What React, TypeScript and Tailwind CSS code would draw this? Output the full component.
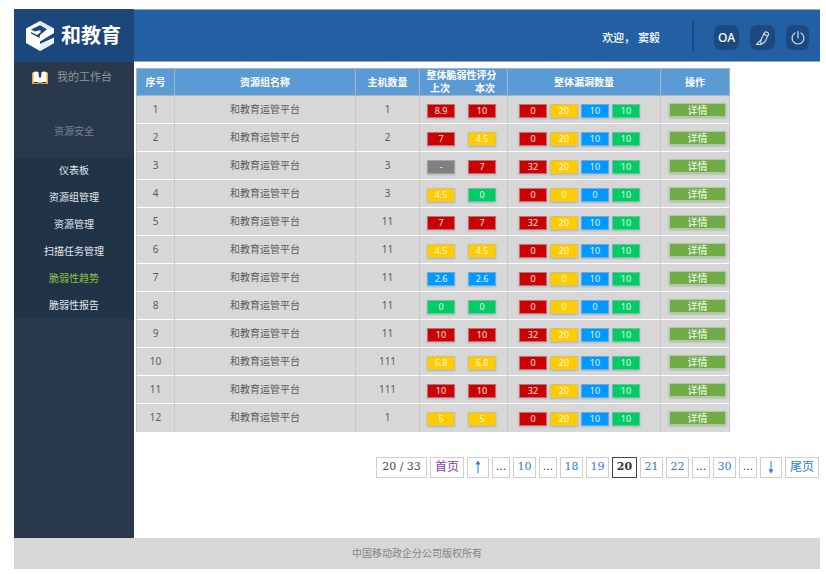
type Tone = "red" | "yellow" | "blue" | "green" | "gray";
type Score = [string, Tone];

interface Row {
  hosts: number;
  last: Score;
  current: Score;
  holes: [number, number, number, number];
}

const rows: Row[] = [
  { hosts: 1, last: ["8.9", "red"], current: ["10", "red"], holes: [0, 20, 10, 10] },
  { hosts: 2, last: ["7", "red"], current: ["4.5", "yellow"], holes: [0, 20, 10, 10] },
  { hosts: 3, last: ["-", "gray"], current: ["7", "red"], holes: [32, 20, 10, 10] },
  { hosts: 3, last: ["4.5", "yellow"], current: ["0", "green"], holes: [0, 0, 0, 10] },
  { hosts: 11, last: ["7", "red"], current: ["7", "red"], holes: [32, 20, 10, 10] },
  { hosts: 11, last: ["4.5", "yellow"], current: ["4.5", "yellow"], holes: [0, 20, 10, 10] },
  { hosts: 11, last: ["2.6", "blue"], current: ["2.6", "blue"], holes: [0, 0, 10, 10] },
  { hosts: 11, last: ["0", "green"], current: ["0", "green"], holes: [0, 0, 0, 10] },
  { hosts: 11, last: ["10", "red"], current: ["10", "red"], holes: [32, 20, 10, 10] },
  { hosts: 111, last: ["6.8", "yellow"], current: ["6.8", "yellow"], holes: [0, 20, 10, 10] },
  { hosts: 111, last: ["10", "red"], current: ["10", "red"], holes: [32, 20, 10, 10] },
  { hosts: 1, last: ["5", "yellow"], current: ["5", "yellow"], holes: [0, 20, 10, 10] },
];

const toneClass: Record<Tone, string> = {
  red: "bg-[#cc0000]",
  yellow: "bg-[#ffcc00]",
  blue: "bg-[#0099ff]",
  green: "bg-[#00cc66]",
  gray: "bg-[#808080]",
};

const holeTones: Tone[] = ["red", "yellow", "blue", "green"];

const menu = ["仪表板", "资源组管理", "资源管理", "扫描任务管理", "脆弱性趋势", "脆弱性报告"];

function Pill({ tone, children }: { tone: Tone; children: React.ReactNode }) {
  return (
    <span
      className={`block h-[14px] w-7 border border-[#b9b9b9]/60 text-center text-[9px] leading-[12px] text-white/90 shadow-[0_1px_2px_rgba(90,120,160,0.35)] ${toneClass[tone]}`}
    >
      {children}
    </span>
  );
}

function Logo() {
  return (
    <svg viewBox="0 0 28 30" className="h-[30px] w-7" aria-hidden="true">
      <path d="M0 7.500 14 0l14 7.500V22l-14 8-14-8Z" fill="#fff" />
      <path d="M14 0v4.500l8 4L28 7.500Z" fill="#dfe8f2" />
      <path d="M14 24v6l14-8v-5Z" fill="#e9eff6" />
      <path d="M5 8.500 14 4.300l7 3.900-7 5.800-.5 3L5 12.500v-1.500l6 3 3.500-2.500V9L9 10.500Z" fill="#1b477a" />
      <path d="M14 20.500v2.500l14-6.500V12Z" fill="#1b477a" />
    </svg>
  );
}

function BookIcon() {
  return (
    <svg viewBox="0 0 16 13" className="h-[13px] w-4" aria-hidden="true">
      <path d="M0 1.500h2V12h4.500L8 13H0ZM14 1.500h2V13H8l1.500-1H14Z" fill="#f0a030" />
      <path d="M1.500 1C3 .2 5 .2 6.500 1.200L7 7l1-1.200L9 7l.5-5.800C11 .2 13 .2 14.500 1v10.500C12 10.800 10 11 8 12.300 6 11 4 10.800 1.500 11.500Z" fill="#fff" />
      <path d="M7.600 7v5h.8V7Z" fill="#f0c080" />
    </svg>
  );
}

function PencilIcon() {
  return (
    <svg viewBox="0 0 16 16" className="size-4" fill="none" stroke="#d5e0ec" strokeWidth="1.1" strokeLinejoin="round" strokeLinecap="round" aria-hidden="true">
      <path d="M1.500 14.500h4.300L9.800 12l3.700-7.500c.7-1.600-3-3.500-3.900-2L6 9.800Z" />
      <path d="M8.600 4l3.900 2M6 9.800l-.2 4.500" />
    </svg>
  );
}

function PowerIcon() {
  return (
    <svg viewBox="0 0 16 16" className="size-4" fill="none" stroke="#d5e0ec" strokeWidth="1.2" strokeLinecap="round" aria-hidden="true">
      <path d="M8 1.500V8M5 3a5.900 5.900 0 1 0 6 0" />
    </svg>
  );
}

function Arrow({ up }: { up?: boolean }) {
  return (
    <svg viewBox="0 0 8 14" className={up ? "h-[14px] w-2" : "h-[14px] w-2 rotate-180"} fill="none" stroke="#2a7bd6" aria-hidden="true">
      <path d="M4 13V2" />
      <path d="M4 .5 1.500 4.500h5Z" fill="#2a7bd6" stroke="none" />
    </svg>
  );
}

const pageBox = "flex h-[21px] items-center justify-center border border-[#cfcfcf]";

function PageLink({ n }: { n: number }) {
  return (
    <a href="#" className={`${pageBox} w-[23px] text-[#2a7bd6]`}>
      {n}
    </a>
  );
}

function Dots() {
  return <span className={`${pageBox} w-[18px] text-[#444]`}>...</span>;
}

const th = "border border-[#a3b4c4] p-0 font-bold";
const td = "border-x border-[#c9c9c9] border-t border-t-white p-0";
const headBtn = "flex h-[25px] items-center justify-center rounded-[7px] bg-[#1c4a80]";

export default function App() {
  return (
    <div className="flex min-h-screen flex-col bg-white pt-[9px] pr-[6px] pb-[5px] pl-[14px] font-['Noto_Sans','Noto_Sans_CJK_SC',sans-serif] text-[10px]">
      <header className="flex h-[53px] bg-[#225fa3]">
        <div className="flex w-[120px] items-center gap-[7px] bg-[#1b477a] pl-3">
          <Logo />
          <span className="text-[20px] leading-5 font-bold whitespace-nowrap text-white">和教育</span>
        </div>
        <div className="flex flex-1 items-center justify-end border-y border-[#8fa9c8] pr-[11px]">
          <span className="pt-[5px] text-[11px] font-medium whitespace-pre text-white">欢迎， 窦毅</span>
          <span className="mr-5 ml-8 h-[31px] w-[2px] bg-[#1b4c85]" />
          <div className="flex gap-[11px] pt-1">
            <button className={`${headBtn} w-[25px] text-[12px] font-medium text-white`}>OA</button>
            <button aria-label="编辑" className={`${headBtn} w-[25px]`}>
              <PencilIcon />
            </button>
            <button aria-label="退出" className={`${headBtn} w-[23px]`}>
              <PowerIcon />
            </button>
          </div>
        </div>
      </header>

      <div className="flex flex-1">
        <aside className="w-[120px] shrink-0 bg-[#29394b]">
          <div className="flex h-[30px] items-center gap-[9px] pl-[18px] text-[11px] text-[#8b949e]">
            <BookIcon />
            我的工作台
          </div>
          <div className="flex h-[65px] items-end justify-center pb-[18px] text-[#7a828b]">资源安全</div>
          <nav className="bg-[#213347]">
            {menu.map((m) => (
              <a
                key={m}
                href="#"
                className={`flex h-[27px] items-center justify-center ${m === "脆弱性趋势" ? "text-[#84c341]" : "text-[#e3e7eb]"}`}
              >
                {m}
              </a>
            ))}
          </nav>
        </aside>

        <main className="flex-1 pt-[6px] pl-[2px]">
          <table className="w-[593px] table-fixed border-collapse text-center text-[#5c5c5c]">
            <colgroup>
              <col className="w-[38px]" />
              <col className="w-[181px]" />
              <col className="w-[64px]" />
              <col className="w-[88px]" />
              <col className="w-[153px]" />
              <col className="w-[69px]" />
            </colgroup>
            <thead>
              <tr className="h-[27px] bg-[#5b9bd5] text-white">
                <th className={th}>序号</th>
                <th className={th}>资源组名称</th>
                <th className={th}>主机数量</th>
                <th className={`${th} leading-[13px]`}>
                  <div className="pr-1">整体脆弱性评分</div>
                  <div className="flex justify-between pr-3 pl-[10px]">
                    <span>上次</span>
                    <span>本次</span>
                  </div>
                </th>
                <th className={th}>整体漏洞数量</th>
                <th className={th}>操作</th>
              </tr>
            </thead>
            <tbody>
              {rows.map((r, i) => (
                <tr key={i} className="h-7 bg-[#d7d7d7]">
                  <td className={td}>{i + 1}</td>
                  <td className={td}>和教育运管平台</td>
                  <td className={td}>{r.hosts}</td>
                  <td className={td}>
                    <div className="flex gap-[13px] pt-[2px] pl-[7px]">
                      <Pill tone={r.last[1]}>{r.last[0]}</Pill>
                      <Pill tone={r.current[1]}>{r.current[0]}</Pill>
                    </div>
                  </td>
                  <td className={td}>
                    <div className="flex gap-[3px] pt-[2px] pl-[11px]">
                      {r.holes.map((h, k) => (
                        <Pill key={k} tone={holeTones[k]}>
                          {h}
                        </Pill>
                      ))}
                    </div>
                  </td>
                  <td className={td}>
                    <div className="pl-2">
                      <button className="block h-[14px] w-[57px] border border-[#b3c9a4] bg-[#70ad47] leading-[12px] text-white shadow-[0_1px_2px_rgba(90,130,70,0.4)]">
                        详情
                      </button>
                    </div>
                  </td>
                </tr>
              ))}
            </tbody>
          </table>

          <nav
            aria-label="分页"
            className="mt-[25px] flex justify-end gap-[3px] pr-[1px] font-['DejaVu_Serif','Noto_Sans_CJK_SC',serif] text-[11px]"
          >
            <span className={`${pageBox} w-[51px] whitespace-nowrap text-[#444]`}>20 / 33</span>
            <a href="#" className={`${pageBox} w-[34px] text-[12px] text-[#7d3fa8]`}>
              首页
            </a>
            <a href="#" aria-label="上一页" className={`${pageBox} w-[22px]`}>
              <Arrow up />
            </a>
            <Dots />
            <PageLink n={10} />
            <Dots />
            <PageLink n={18} />
            <PageLink n={19} />
            <span className="flex h-[21px] w-[25px] items-center justify-center border border-[#444] font-bold text-[#333]">20</span>
            <PageLink n={21} />
            <PageLink n={22} />
            <Dots />
            <PageLink n={30} />
            <Dots />
            <a href="#" aria-label="下一页" className={`${pageBox} w-[22px]`}>
              <Arrow />
            </a>
            <a href="#" className={`${pageBox} w-[34px] text-[12px] text-[#2a7bd6]`}>
              尾页
            </a>
          </nav>
        </main>
      </div>

      <footer className="flex h-[31px] items-center justify-center bg-[#d7d7d7] text-[#858585]">
        中国移动政企分公司版权所有
      </footer>
    </div>
  );
}
